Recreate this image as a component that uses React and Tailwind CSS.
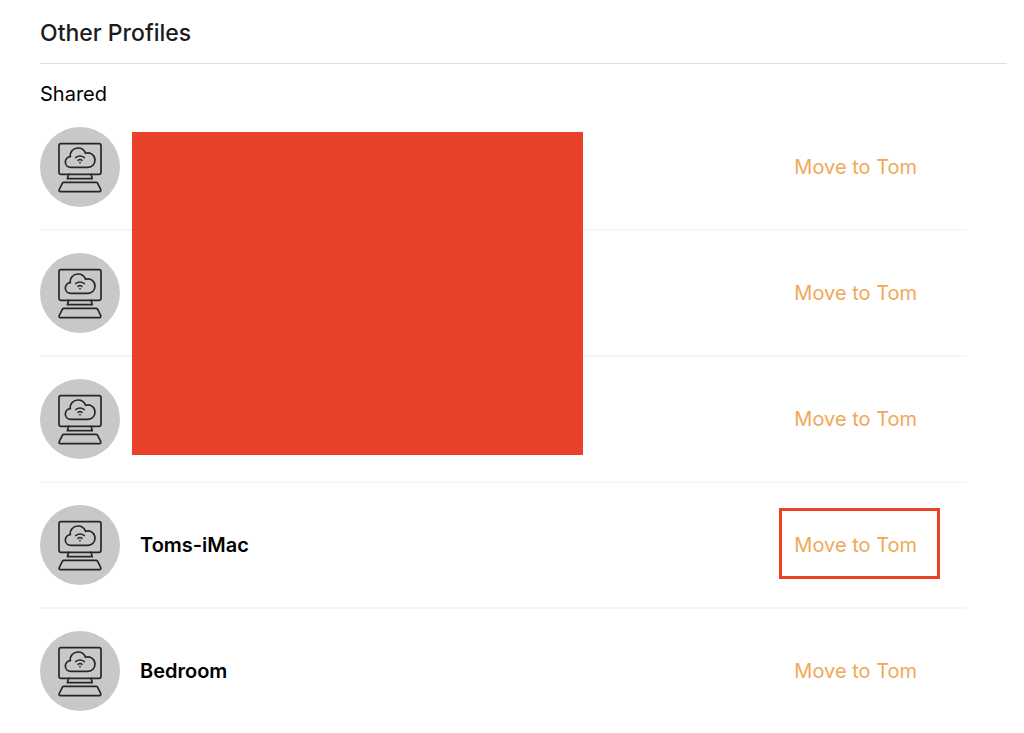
const devices = [
  { id: 1 },
  { id: 2 },
  { id: 3 },
  { id: 4, name: 'Toms-iMac', highlighted: true },
  { id: 5, name: 'Bedroom' },
];

function ComputerIcon() {
  return (
    <svg
      className="h-[70px] w-[50px]"
      viewBox="0 0 150 210"
      fill="none"
      stroke="#262626"
      strokeWidth="5"
      strokeLinecap="round"
      strokeLinejoin="round"
      aria-hidden="true"
    >
      <rect x="12" y="35" width="126" height="92" rx="6" />
      <path d="M41 127 37 140H112L108 127" />
      <path d="M27 151H123Q126 151 128 154L137 172Q139 179 133 179H17Q10 179 13 172L22 154Q24 151 27 151Z" />
      <path d="M48 106C38 106 31 99 31 90C31 81 38 74 46 74C44 59 55 48 69 48C80 48 88 54 92 64C107 59 120 70 120 84C120 97 111 106 99 106Z" />
      <path d="M62 77Q75 67 88 77M69 85Q75 80 81 85" strokeWidth="4.5" />
      <circle cx="75" cy="92" r="2.5" fill="#262626" stroke="none" />
    </svg>
  );
}

function DeviceRow({ name, highlighted }) {
  return (
    <li className="flex h-[126px] items-center gap-5 border-b-2 border-[#f6f6f6] last:h-[124px] last:border-b-0">
      <span className="flex size-20 shrink-0 items-center justify-center rounded-full bg-[#c8c8c8]">
        <ComputerIcon />
      </span>
      <span className="grow text-xl font-semibold text-black">{name}</span>
      <span className="relative mr-[50px] shrink-0">
        <button type="button" className="block cursor-pointer text-xl text-[#f0a858]">
          Move to Tom
        </button>
        {highlighted && (
          <span className="pointer-events-none absolute -top-[23px] -right-[23px] -bottom-5 -left-[15px] border-3 border-[#e94228]" />
        )}
      </span>
    </li>
  );
}

export default function App() {
  return (
    <main className="min-h-screen bg-white pt-[17px] pr-[17px] pl-10 font-['Inter',sans-serif]">
      <h1 className="border-b border-[#dfdfdf] pb-[14px] text-[23px] leading-8 font-medium text-[#1c1c1e]">
        Other Profiles
      </h1>
      <section className="mr-10">
        <h2 className="pt-5 text-xl leading-[21px] text-black">Shared</h2>
        <div className="relative">
          <ul>
            {devices.map((device) => (
              <DeviceRow key={device.id} name={device.name} highlighted={device.highlighted} />
            ))}
          </ul>
          <div className="absolute top-[27px] left-[92px] h-[323px] w-[451px] bg-[#e94228]" />
        </div>
      </section>
    </main>
  );
}
